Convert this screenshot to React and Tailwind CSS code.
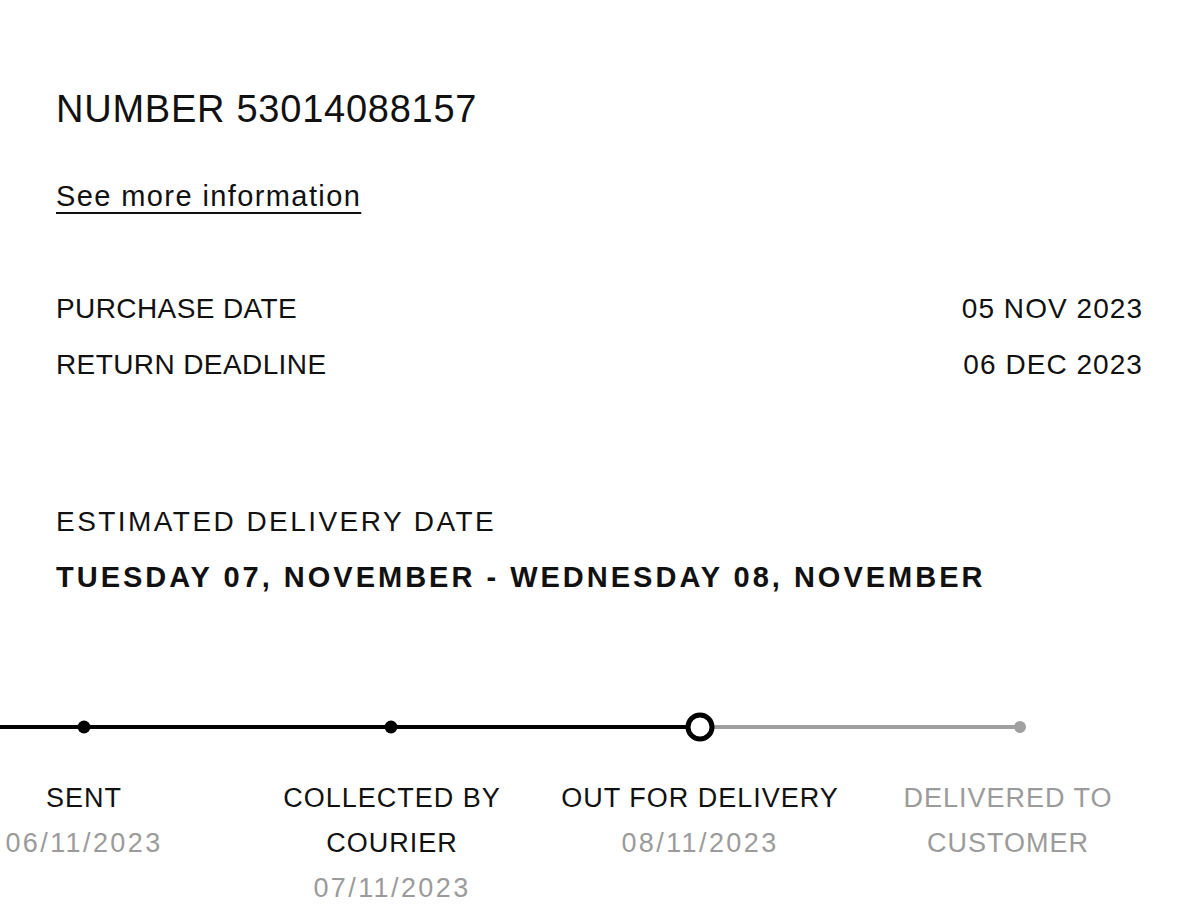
import React from 'react';

const steps = [
  { label: 'SENT', date: '06/11/2023', done: true },
  { label: 'COLLECTED BY COURIER', date: '07/11/2023', done: true },
  { label: 'OUT FOR DELIVERY', date: '08/11/2023', done: true },
  { label: 'DELIVERED TO CUSTOMER', date: '', done: false },
];

function Track() {
  return (
    <svg width="1200" height="40" viewBox="0 0 1200 40" className="block">
      <line x1="0" y1="20" x2="700" y2="20" stroke="#000" strokeWidth="4" />
      <line x1="700" y1="20" x2="1020" y2="20" stroke="#a0a0a0" strokeWidth="4" />
      <circle cx="84" cy="20" r="6.5" fill="#000" />
      <circle cx="391" cy="20" r="6.5" fill="#000" />
      <circle cx="1020" cy="20" r="6" fill="#a0a0a0" />
      <circle cx="700" cy="20" r="12" fill="#fff" stroke="#000" strokeWidth="5" />
    </svg>
  );
}

export default function App() {
  return (
    <div
      className="w-[1200px] h-[917px] bg-white text-[#111] overflow-hidden"
      style={{ fontFamily: '"Liberation Sans", Arial, sans-serif' }}
    >
      <div className="pl-[56px] pr-[57px] pt-[87px]">
        <h1 className="text-[38px] leading-[44px] tracking-[0.75px]">NUMBER 53014088157</h1>

        <a
          href="#"
          className="inline-block mt-[48px] text-[29px] leading-[34px] tracking-[1.4px] underline decoration-[2px] underline-offset-[6px]"
        >
          See more information
        </a>

        <div className="mt-[78px] flex flex-col gap-[20px] text-[28px] leading-[36px]">
          <div className="flex justify-between">
            <span className="tracking-[0.4px]">PURCHASE DATE</span>
            <span className="tracking-[1.05px]">05 NOV 2023</span>
          </div>
          <div className="flex justify-between">
            <span className="tracking-[0.4px]">RETURN DEADLINE</span>
            <span className="tracking-[1.05px]">06 DEC 2023</span>
          </div>
        </div>

        <div className="mt-[121px] text-[28px] leading-[36px] tracking-[2.45px]">ESTIMATED DELIVERY DATE</div>
        <div className="mt-[19px] text-[29px] leading-[36px] font-bold tracking-[3px]">
          TUESDAY 07, NOVEMBER - WEDNESDAY 08, NOVEMBER
        </div>
      </div>

      <div className="mt-[112px]">
        <Track />
      </div>

      <div className="flex ml-[-70px] mt-[29px]">
        {steps.map((s, i) => (
          <div
            key={i}
            className={`w-[308px] shrink-0 px-[8px] text-center text-[27px] leading-[45px] ${
              s.date || s.done ? 'text-[#111]' : 'text-[#9b9b9b]'
            }`}
          >
            <div className="tracking-[1px]">{s.label}</div>
            {s.date && <div className="text-[#9b9b9b] tracking-[2.4px]">{s.date}</div>}
          </div>
        ))}
      </div>
    </div>
  );
}
